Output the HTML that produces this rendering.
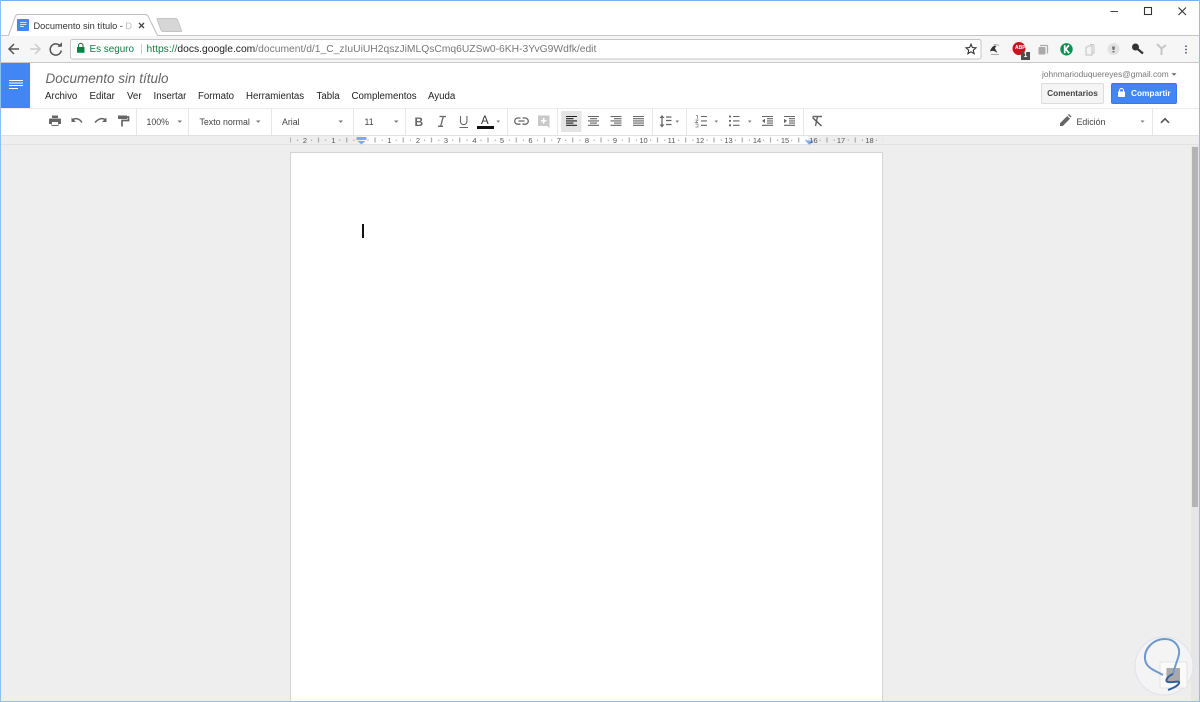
<!DOCTYPE html>
<html><head><meta charset="utf-8"><title>Documento sin título</title>
<style>
html,body{margin:0;padding:0}
html{background:#eee}
#w{width:1200px;height:702px;position:relative;overflow:hidden;background:#eee;font-family:"Liberation Sans",Arial,sans-serif;filter:blur(.35px)}
body{width:1200px;height:702px;overflow:hidden}
.a{position:absolute;white-space:nowrap}
.t{position:absolute;white-space:nowrap;line-height:14px}
.m{font-size:9.7px;color:#222;top:90px}
.tb{font-size:8.8px;color:#444;top:114.5px}
.sep{position:absolute;top:108px;width:1px;height:27px;background:#e6e6e6}
svg{position:absolute;left:0;top:0}
</style></head><body><div id="w">
<div class="a" style="left:0;top:0;width:1200px;height:36px;background:#fff"></div>
<div class="a" style="left:0;top:36px;width:1200px;height:27px;background:#f6f6f6"></div>
<div class="a" style="left:0;top:63px;width:1200px;height:72px;background:#fff"></div>
<div class="a" style="left:0;top:135px;width:1200px;height:10px;background:#eee;border-top:1px solid #e2e2e2;border-bottom:1px solid #e2e2e2;box-sizing:border-box"></div>
<div class="a" style="left:0;top:108px;width:1200px;height:1px;background:#ececec"></div>
<div class="a" style="left:362px;top:136px;width:446px;height:8px;background:#fff"></div>
<div class="a" style="left:290px;top:152px;width:593px;height:550px;background:#fff;border:1px solid #d4d4d4;border-bottom:0;box-sizing:border-box"></div>
<div class="a" style="left:1191px;top:146px;width:8px;height:556px;background:#e6e6e6"></div>
<div class="a" style="left:1192px;top:147px;width:6px;height:360px;background:#b4b4b4"></div>
<div class="a" style="left:362px;top:224px;width:2px;height:14px;background:#111"></div>

<div class="a" style="left:1px;top:63px;width:29px;height:45px;background:#4285f4"></div>

<svg width="1200" height="702" viewBox="0 0 1200 702" fill="none">
<defs>
<pattern id="rt" x="361" y="136" width="28.25" height="8" patternUnits="userSpaceOnUse">
<path d="M14 1.5v5" stroke="#999" stroke-width="1"/>
<path d="M7 3.500v1.500M21.200 3.500v1.500" stroke="#aaa" stroke-width="1"/>
</pattern>
</defs>
<!-- window borders -->
<path d="M0 .5H1200" stroke="#74b3f4"/>
<path d="M.5 0V702M1199.500 0V702" stroke="#8cc0f5"/>
<path d="M0 701.500H1200" stroke="#8cc0f5"/>
<!-- tab strip -->
<path d="M1 35.500H8.500L15.500 16Q16.300 14.500 18 14.500H145Q147 14.500 148 16L157.500 35.500H1199" stroke="#bdbdbd" fill="#fff"/>
<path d="M157 19.500Q157 18.500 158.500 18.500H175Q177 18.500 177.600 20L181.500 30.500Q182 31.500 180.500 31.500H163Q161.500 31.500 161 30Z" fill="#d6d6d6" stroke="#c4c4c4"/>
<path d="M1 35.500H8M157 35.500H1199" stroke="#c4c4c4"/>
<rect x="17" y="19" width="12" height="12" rx="1" fill="#4285f4"/>
<path d="M20 22.500h6.500M20 24.500h6.500M20 26.500h4" stroke="#cfe0fc"/>
<path d="M139 23l5 5m0-5l-5 5" stroke="#444" stroke-width="1.300"/>
<!-- nav -->
<path d="M19 49H9.500M14 44l-5 5 5 5" stroke="#555" stroke-width="1.500"/>
<path d="M30 49H39M35 44l5 5-5 5" stroke="#ccc" stroke-width="1.500"/>
<path d="M60.300 46.200A5.600 5.600 0 1 0 61.300 50.500" stroke="#555" stroke-width="1.500"/>
<path d="M57.300 46.800h4.600v-4.600z" fill="#555"/>
<!-- omnibox -->
<rect x="70.500" y="39.500" width="910.500" height="19.500" rx="2" fill="#fff" stroke="#c6c6c6"/>
<path d="M0 62.500H1200" stroke="#c8c8c8"/>
<rect x="77" y="47" width="7.500" height="5.800" rx=".6" fill="#0b8043"/>
<path d="M78.500 47v-1.400a2.250 2.250 0 0 1 4.500 0V47" stroke="#0b8043" stroke-width="1.100"/>
<path d="M141.500 44v10" stroke="#ccc"/>
<path d="M971 44.200l1.400 3.300 3.600.3-2.700 2.400.8 3.500-3.100-1.900-3.100 1.900.8-3.500-2.700-2.400 3.600-.3z" stroke="#333" stroke-width="1.100"/>
<!-- extensions -->
<path d="M990 51.500c1-4 4-7 6.500-5.500-1 1-1.300 1.500-1.500 2.500l2.500 4.500-2.500-1.500c-1.500-1-3-.8-5 0z" fill="#333"/>
<path d="M991 54.500h8M993.500 45c2-1 4.500-.5 5.500 1" stroke="#aaa"/>
<circle cx="1019" cy="48.500" r="6.500" fill="#c9141e"/>
<rect x="1021" y="52" width="9" height="8" fill="#4d4d4d"/>
<path d="M1040 45.500h6.500a1 1 0 0 1 1 1v7" stroke="#aaa" stroke-width="1.200"/>
<rect x="1038.500" y="47" width="7" height="7.500" rx="1" fill="#aaa"/>
<circle cx="1066.500" cy="49.300" r="6.200" fill="#0a9150"/>
<path d="M1064.700 45.200v8M1069 45.200l-3.300 4 3.500 4" stroke="#fff" stroke-width="1.700"/>
<path d="M1086 47.500v7.500h6v-9h-3.500z" stroke="#c0c0c0" fill="#f4f4f4"/>
<path d="M1090 44.500h3l1 1.500v7h-2" stroke="#c4c4c4"/>
<circle cx="1113.500" cy="49" r="6" fill="#e2e2e2"/>
<path d="M1112 46.500h3l-.5 3.500h-2zM1112.500 51h2v1.500h-2z" fill="#777"/>
<circle cx="1135.500" cy="47" r="3.500" fill="#333"/>
<path d="M1137 48.500l6 5" stroke="#333" stroke-width="2.200"/>
<path d="M1157 44l4.500 4.500 4.500-3.500M1161.500 48.500v6.500" stroke="#c6c6c6" stroke-width="2"/>
<path d="M1186 45.500v1.500M1186 48.700v1.500M1186 52v1.500" stroke="#555" stroke-width="1.600"/>
<!-- window buttons -->
<path d="M1110.500 11.500H1118" stroke="#444"/>
<rect x="1144.500" y="7.500" width="7" height="7" stroke="#333" stroke-width="1.100"/>
<path d="M1178.500 7.500l7.500 7.500m0-7.500l-7.500 7.500" stroke="#333" stroke-width="1.100"/>
<!-- docs logo -->
<path d="M9 80.500H23M9 83H23M9 85.500H23M9 88.500H18" stroke="#fff" stroke-width="1.100"/>
<!-- account caret -->
<path d="M1171.500 73.200h5l-2.500 2.500z" fill="#666"/>
<!-- toolbar left icons -->
<path d="M52 115.500h6v2.500h-6z" fill="#666"/>
<path d="M50 118.500h10a1 1 0 0 1 1 1v4.500h-2.500v2h-7v-2H49v-4.500a1 1 0 0 1 1-1z" fill="#666"/>
<rect x="52" y="122" width="6" height="3" fill="#fff"/>
<path d="M73 119.500c2-1.500 6-1.500 9 3" stroke="#666" stroke-width="1.500"/>
<path d="M71.500 117.500v4.500h4.500z" fill="#666"/>
<path d="M105 119.500c-2-1.500-6-1.500-10 3" stroke="#666" stroke-width="1.500"/>
<path d="M106.500 117.500v4.500h-4.500z" fill="#666"/>
<path d="M118 115.500h9v3.500h-9z" fill="#666"/>
<path d="M127 117h1.500v3.500h-6.500v6" stroke="#666" stroke-width="1.700"/>
<!-- carets -->
<path d="M177.500 120.500h4.500l-2.250 2.400zM256 120.500h4.500l-2.250 2.400zM338.500 120.500h4.500l-2.250 2.400zM394 120.500h4.500l-2.250 2.400zM496.500 120.500h3.500l-1.750 2.200zM675.500 120.500h3.500l-1.750 2.200zM714.500 120.500h3.500l-1.750 2.200zM748 120.500h3.500l-1.750 2.200zM1140.500 120.500h4l-2 2.200z" fill="#777"/>
<!-- italic -->
<path d="M439.500 116.500h6.500M443.300 116.500l-2.600 9.500M438 126.300h5" stroke="#666" stroke-width="1.300"/>
<!-- underline -->
<path d="M460.500 116v5.500a3.200 3.200 0 0 0 6.400 0V116M459.500 127.500h8.500" stroke="#666" stroke-width="1.100"/>
<!-- text color -->
<rect x="477" y="126" width="17" height="3" fill="#111"/>
<!-- link -->
<path d="M520.500 118h-2.700a3 3 0 0 0 0 6.200h2.700M522.500 118h2.700a3 3 0 0 1 0 6.200h-2.700M518.500 121h6" stroke="#666" stroke-width="1.300"/>
<!-- comment -->
<path d="M538 115.500h11.500v12.500l-2.500-2H538z" fill="#c9c9c9"/>
<path d="M543.700 118v5.500M541 120.700h5.500" stroke="#fff" stroke-width="1.500"/>
<!-- align -->
<rect x="561" y="111" width="20.500" height="21" rx="1" fill="#e4e4e4"/>
<g stroke="#222" stroke-width="1.100"><path d="M566 116.500h11M566 118.700h7.500M566 120.900h11M566 123.100h7.500M566 125.300h11"/></g>
<g stroke="#666" stroke-width="1.100">
<path d="M588 116.500h11M590 118.700h7M588 120.900h11M590 123.100h7M588 125.300h11"/>
<path d="M610.500 116.500h11M614 118.700h7.500M610.500 120.900h11M614 123.100h7.500M610.500 125.300h11"/>
<path d="M633 116.500h11M633 118.700h11M633 120.900h11M633 123.100h11M633 125.300h11"/>
<path d="M662 116.500v9.500" stroke-width="1.300"/>
<path d="M666 117h5.500M666 120.500h5.500M666 124.500h5.500" stroke-width="1.300"/>
<path d="M701 116.500h6M701 120.900h6M701 125.300h6"/>
<path d="M733 116.500h6.500M733 120.900h6.500M733 125.300h6.500"/>
<path d="M729 116.500h2M729 120.900h2M729 125.300h2" stroke-width="1.800"/>
<path d="M762 116.500h11M767 118.700h6M767 120.900h6M767 123.100h6M762 125.300h11"/>
<path d="M784 116.500h11M789 118.700h6M789 120.900h6M789 123.100h6M784 125.300h11"/>
</g>
<path d="M659.500 118l2.500-3 2.500 3zM659.500 124.500l2.500 3 2.500-3z" fill="#666"/>
<path d="M696 115.500h1.500v3.500M695.500 120h2.500l-2.500 2.500h2.500M695.500 124h2.500v3h-2.500" stroke="#777" stroke-width=".7"/>
<path d="M765 118.700v4.400l-3-2.200zM784 118.700v4.400l3-2.200z" fill="#666"/>
<!-- clear format -->
<path d="M812.500 116.500h9.500M817.500 116.500l-2 9.500" stroke="#666" stroke-width="1.400"/>
<path d="M812.500 117.500l9 8.500" stroke="#555" stroke-width="1.400"/>
<!-- pencil -->
<path d="M1060 126v-2.800l7.200-7.200 2.800 2.800-7.200 7.200z" fill="#666"/>
<path d="M1068 115l1-1 2.500 2.500-1 1z" fill="#666"/>
<!-- chevron -->
<path d="M1161 122.800l4-4 4 4" stroke="#555" stroke-width="1.600"/>
<!-- ruler -->
<rect x="290" y="136" width="593" height="8" fill="url(#rt)"/>
<path d="M356.500 137h10v3h-10z" fill="#7fabf5"/>
<path d="M357.500 141h8l-4 3.500z" fill="#7fabf5"/>
<path d="M805 140.500h9l-4.500 4.500z" fill="#7fabf5"/>
<!-- watermark -->
<circle cx="1164" cy="666" r="29" fill="#f4f4f5" stroke="#dee2ea" stroke-width="1"/>
<rect x="1160" y="662" width="27" height="26" rx="1" fill="#fafafa" stroke="#e4e4e4"/>
<rect x="1166.500" y="668" width="13.500" height="14" fill="#a9a9a9"/>
<path d="M1163 675C1154 670 1146 668 1145 659C1144 649 1153 639 1165 639C1175 639 1180 647 1179 654C1178 660 1175 665 1173 674" stroke="#6f98cf" stroke-width="2"/>
<path d="M1173 674C1168 676 1164 681 1168 682C1173 683 1180 680 1179 683C1178 686 1173 688 1168 690" stroke="#335f9c" stroke-width="2"/>
</svg>

<div class="t" style="left:33.500px;top:19px;font-size:9.200px;color:#333">Documento sin título - <span style="color:#bbb">D</span></div>
<div class="t" style="left:89.500px;top:43px;font-size:9.900px;color:#0b8043">Es seguro</div>
<div class="t" style="left:146.500px;top:43px;font-size:10.300px;color:#777"><span style="color:#0b8043">https://</span><span style="color:#222">docs.google.com</span>/document/d/1_C_zIuUiUH2qszJiMLQsCmq6UZSw0-6KH-3YvG9Wdfk/edit</div>
<div class="t" style="left:1015px;top:45px;font-size:5px;color:#fff;font-weight:bold;line-height:7px">ABP</div>
<div class="t" style="left:1023.500px;top:52px;font-size:7px;color:#fff;font-weight:bold;line-height:8px">1</div>

<div class="t" style="left:45.500px;top:72px;font-size:13.500px;font-style:italic;color:#666">Documento sin título</div>
<div class="t m" style="left:45px">Archivo</div>
<div class="t m" style="left:89.500px">Editar</div>
<div class="t m" style="left:127px">Ver</div>
<div class="t m" style="left:153.500px">Insertar</div>
<div class="t m" style="left:198px">Formato</div>
<div class="t m" style="left:246px">Herramientas</div>
<div class="t m" style="left:316.500px">Tabla</div>
<div class="t m" style="left:351.500px">Complementos</div>
<div class="t m" style="left:428px">Ayuda</div>

<div class="t" style="left:1042px;top:67px;font-size:8.350px;color:#777">johnmarioduquereyes@gmail.com</div>
<div class="a" style="left:1041px;top:83px;width:63px;height:21px;box-sizing:border-box;background:#f5f5f5;border:1px solid #dcdcdc;border-radius:2px;font-size:8.300px;font-weight:bold;color:#444;line-height:19px;text-align:center">Comentarios</div>
<div class="a" style="left:1111px;top:83px;width:66px;height:21px;box-sizing:border-box;background:#4285f4;border:1px solid #3b78e7;border-radius:2px;font-size:8.300px;font-weight:bold;color:#fff;line-height:19px;padding-left:19px">Compartir</div>
<svg width="1200" height="702" viewBox="0 0 1200 702" fill="none" style="pointer-events:none">
<rect x="1118" y="91.500" width="7" height="5.500" rx=".6" fill="#fff"/><path d="M1119.500 91.500v-1a2 2 0 0 1 4 0v1" stroke="#fff" stroke-width="1.100"/>
</svg>

<div class="sep" style="left:136px"></div><div class="sep" style="left:188px"></div><div class="sep" style="left:271px"></div><div class="sep" style="left:353px"></div><div class="sep" style="left:405px"></div><div class="sep" style="left:507px"></div><div class="sep" style="left:557px"></div><div class="sep" style="left:652px"></div><div class="sep" style="left:686px"></div><div class="sep" style="left:803px"></div><div class="sep" style="left:1152px"></div>

<div class="t tb" style="left:146.500px">100%</div>
<div class="t tb" style="left:199.500px">Texto normal</div>
<div class="t tb" style="left:282px">Arial</div>
<div class="t tb" style="left:364.500px">11</div>
<div class="t tb" style="left:1076.500px">Edición</div>
<div class="t" style="left:414.500px;top:114.500px;font-size:12px;font-weight:bold;color:#666">B</div>
<div class="t" style="left:481px;top:114px;font-size:11.500px;color:#333">A</div>

<svg width="1200" height="702" viewBox="0 0 1200 702" style="font-family:'Liberation Sans',Arial,sans-serif;font-size:7.500px;fill:#555" text-anchor="middle">
<text x="305" y="143">2</text><text x="333.500" y="143">1</text><text x="389.500" y="143">1</text><text x="418" y="143">2</text><text x="446" y="143">3</text><text x="474.500" y="143">4</text><text x="502" y="143">5</text><text x="530.500" y="143">6</text><text x="559" y="143">7</text><text x="587" y="143">8</text><text x="615" y="143">9</text><text x="643.500" y="143">10</text><text x="671.500" y="143">11</text><text x="700" y="143">12</text><text x="728.500" y="143">13</text><text x="757" y="143">14</text><text x="785" y="143">15</text><text x="813.500" y="143">16</text><text x="841" y="143">17</text><text x="869.500" y="143">18</text>
</svg>
</div></body></html>
